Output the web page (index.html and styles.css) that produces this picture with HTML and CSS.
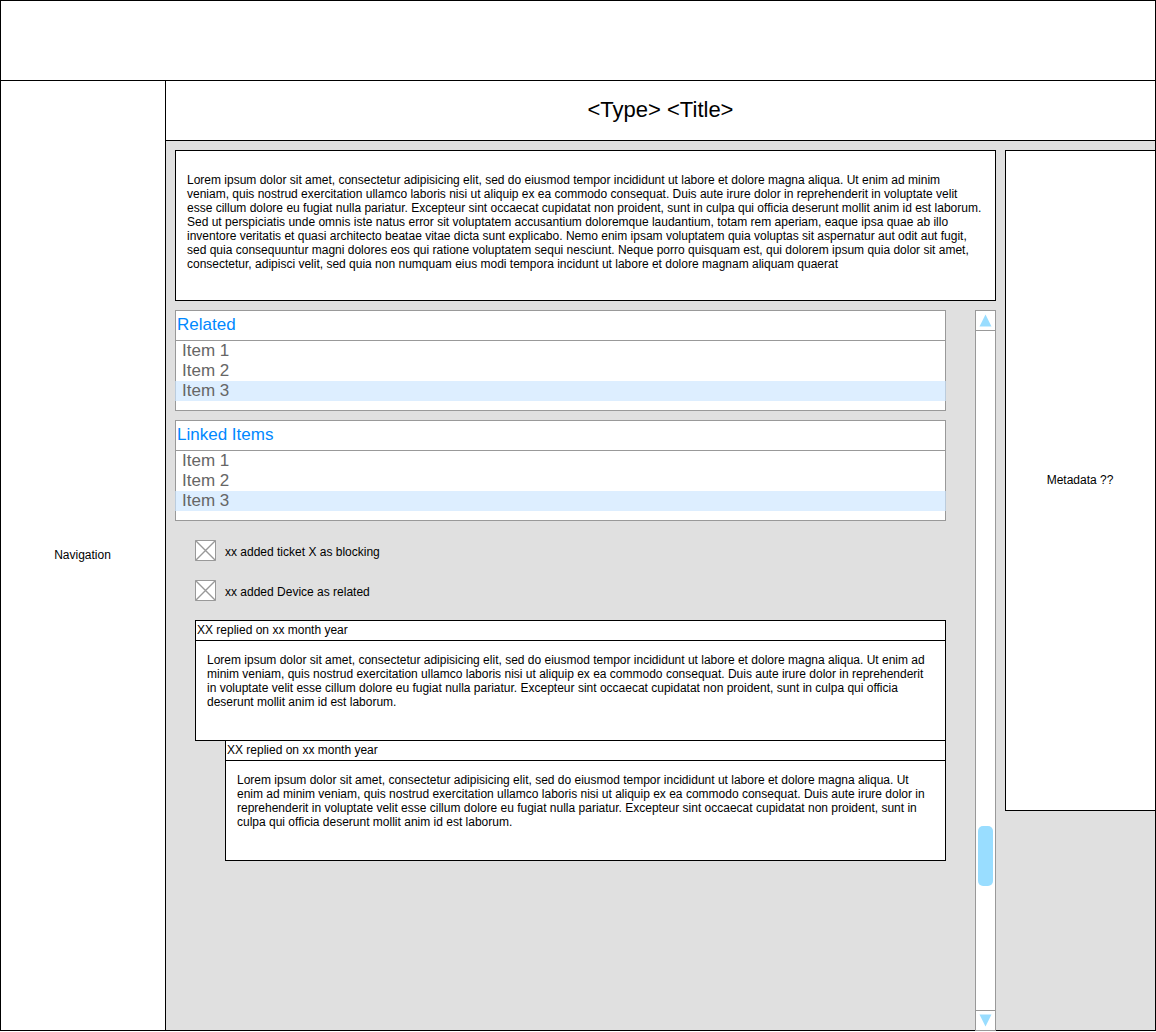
FILE: index.html
```html
<!DOCTYPE html>
<html lang="en">
<head>
<meta charset="utf-8">
<meta name="viewport" content="width=device-width, initial-scale=1">
<title>Ticket detail wireframe</title>
<link rel="stylesheet" href="styles.css">
</head>
<body>
<div class="frame">
  <header class="topbar"></header>
  <div class="workspace">
    <nav class="navigation">Navigation</nav>
    <main class="page">
      <h1 class="page-title">&lt;Type&gt; &lt;Title&gt;</h1>
      <div class="content">
        <div class="primary">
          <section class="summary">
            <p>Lorem ipsum dolor sit amet, consectetur adipisicing elit, sed do eiusmod tempor incididunt ut labore et dolore magna aliqua. Ut enim ad minim veniam, quis nostrud exercitation ullamco laboris nisi ut aliquip ex ea commodo consequat. Duis aute irure dolor in reprehenderit in voluptate velit esse cillum dolore eu fugiat nulla pariatur. Excepteur sint occaecat cupidatat non proident, sunt in culpa qui officia deserunt mollit anim id est laborum. Sed ut perspiciatis unde omnis iste natus error sit voluptatem accusantium doloremque laudantium, totam rem aperiam, eaque ipsa quae ab illo inventore veritatis et quasi architecto beatae vitae dicta sunt explicabo. Nemo enim ipsam voluptatem quia voluptas sit aspernatur aut odit aut fugit, sed quia consequuntur magni dolores eos qui ratione voluptatem sequi nesciunt. Neque porro quisquam est, qui dolorem ipsum quia dolor sit amet, consectetur, adipisci velit, sed quia non numquam eius modi tempora incidunt ut labore et dolore magnam aliquam quaerat</p>
          </section>
          <div class="scroll-area">
            <div class="activity">
              <section class="list-card">
                <h2>Related</h2>
                <ul>
                  <li>Item 1</li>
                  <li>Item 2</li>
                  <li class="selected">Item 3</li>
                </ul>
              </section>
              <section class="list-card">
                <h2>Linked Items</h2>
                <ul>
                  <li>Item 1</li>
                  <li>Item 2</li>
                  <li class="selected">Item 3</li>
                </ul>
              </section>
              <div class="feed">
                <div class="event">
                  <svg class="event-icon" viewBox="0 0 21 21" aria-hidden="true"><path d="M.5.5h20v20H.5z"/><path stroke-width="1.4" d="M.5.5l20 20M20.5.5l-20 20"/></svg>
                  <span>xx added ticket X as blocking</span>
                </div>
                <div class="event">
                  <svg class="event-icon" viewBox="0 0 21 21" aria-hidden="true"><path d="M.5.5h20v20H.5z"/><path stroke-width="1.4" d="M.5.5l20 20M20.5.5l-20 20"/></svg>
                  <span>xx added Device as related</span>
                </div>
                <div class="replies">
                  <article class="reply">
                    <h3>XX replied on xx month year</h3>
                    <p>Lorem ipsum dolor sit amet, consectetur adipisicing elit, sed do eiusmod tempor incididunt ut labore et dolore magna aliqua. Ut enim ad minim veniam, quis nostrud exercitation ullamco laboris nisi ut aliquip ex ea commodo consequat. Duis aute irure dolor in reprehenderit in voluptate velit esse cillum dolore eu fugiat nulla pariatur. Excepteur sint occaecat cupidatat non proident, sunt in culpa qui officia deserunt mollit anim id est laborum.</p>
                  </article>
                  <article class="reply nested">
                    <h3>XX replied on xx month year</h3>
                    <p>Lorem ipsum dolor sit amet, consectetur adipisicing elit, sed do eiusmod tempor incididunt ut labore et dolore magna aliqua. Ut enim ad minim veniam, quis nostrud exercitation ullamco laboris nisi ut aliquip ex ea commodo consequat. Duis aute irure dolor in reprehenderit in voluptate velit esse cillum dolore eu fugiat nulla pariatur. Excepteur sint occaecat cupidatat non proident, sunt in culpa qui officia deserunt mollit anim id est laborum.</p>
                  </article>
                </div>
              </div>
            </div>
            <div class="scrollbar">
              <button type="button" aria-label="Scroll up"><svg viewBox="0 0 13 13" aria-hidden="true"><path d="M6.5.5l6 12h-12z"/></svg></button>
              <div class="track"><div class="thumb"></div></div>
              <button type="button" aria-label="Scroll down"><svg viewBox="0 0 13 13" aria-hidden="true"><path d="M6.5 12.500l6-12h-12z"/></svg></button>
            </div>
          </div>
        </div>
        <aside class="metadata">Metadata ??</aside>
      </div>
    </main>
  </div>
</div>
</body>
</html>
```
FILE: styles.css
```css
* {
  box-sizing: border-box;
}

body {
  margin: 0;
  background: #fff;
  color: #000;
  font: 12px/14px "Liberation Sans", Arial, sans-serif;
}

h1, h2, h3, p, ul {
  margin: 0;
  padding: 0;
  font-weight: normal;
}

.frame {
  display: flex;
  flex-direction: column;
  min-height: calc(100vh - 1px);
  border: 1px solid #000;
}

.topbar {
  height: 80px;
  border-bottom: 1px solid #000;
}

.workspace {
  flex: 1;
  display: flex;
}

.navigation,
.metadata {
  flex: none;
  display: flex;
  align-items: center;
  justify-content: center;
  padding: 0 1px 2px 0;
}

.navigation {
  width: 165px;
  border-right: 1px solid #000;
}

.page {
  flex: 1;
  min-width: 0;
  display: flex;
  flex-direction: column;
}

.page-title {
  padding: 16px 0 17px;
  border-bottom: 1px solid #000;
  font-size: 22px;
  line-height: 26px;
  text-align: center;
}

.content {
  flex: 1;
  display: flex;
  gap: 9px;
  padding: 9px 0 0 9px;
  background: #e0e0e0;
}

.primary {
  flex: 1;
  min-width: 0;
  display: flex;
  flex-direction: column;
  gap: 9px;
}

.summary {
  min-height: 151px;
  padding: 22px 11px;
  border: 1px solid #000;
  background: #fff;
}

.metadata {
  align-self: flex-start;
  width: 150px;
  height: 661px;
  border: 1px solid #000;
  border-right: 0;
  background: #fff;
}

.scroll-area {
  flex: 1;
  display: flex;
  gap: 29px;
}

.activity {
  flex: 1;
  min-width: 0;
  display: flex;
  flex-direction: column;
  gap: 9px;
}

.list-card {
  padding-bottom: 9px;
  border: 1px solid #999;
  background: #fff;
  font-size: 17px;
  line-height: 20px;
}

.list-card h2 {
  padding: 4px 1px 5px;
  border-bottom: 1px solid #999;
  color: #08f;
  font-size: 17px;
}

.list-card ul {
  list-style: none;
  color: #666;
}

.list-card li {
  padding: 0 6px;
}

.list-card .selected {
  margin: 0 -1px;
  border: solid #bcd;
  border-width: 0 1px;
  background: #def;
}

.feed {
  display: flex;
  flex-direction: column;
  gap: 19px;
  padding: 10px 0 0 20px;
}

.event {
  display: flex;
  align-items: center;
  gap: 9px;
}

.event span {
  padding-top: 2px;
}

.event-icon {
  width: 21px;
  height: 21px;
  fill: #fff;
  stroke: #999;
}

.reply {
  min-height: 121px;
  border: 1px solid #000;
  background: #fff;
}

.reply.nested {
  margin: -1px 0 0 30px;
}

.reply h3 {
  padding: 2px 1px 3px;
  border-bottom: 1px solid #000;
  font-size: 12px;
}

.reply p {
  padding: 12px 11px;
}

.scrollbar {
  flex: none;
  display: flex;
  flex-direction: column;
  width: 21px;
  margin-bottom: -1px;
  border: 1px solid #999;
  background: #fff;
}

.scrollbar button {
  display: flex;
  align-items: center;
  justify-content: center;
  height: 19px;
  padding: 0;
  border: 0;
  background: none;
}

.scrollbar svg {
  width: 13px;
  height: 13px;
  fill: #9df;
}

.track {
  flex: 1;
  display: flex;
  flex-direction: column;
  align-items: center;
  border: solid #999;
  border-width: 1px 0;
}

.track::before {
  content: "";
  flex: 4;
}

.track::after {
  content: "";
  flex: 1;
}

.thumb {
  width: 15px;
  height: 60px;
  border-radius: 5px;
  background: #9df;
}
```
